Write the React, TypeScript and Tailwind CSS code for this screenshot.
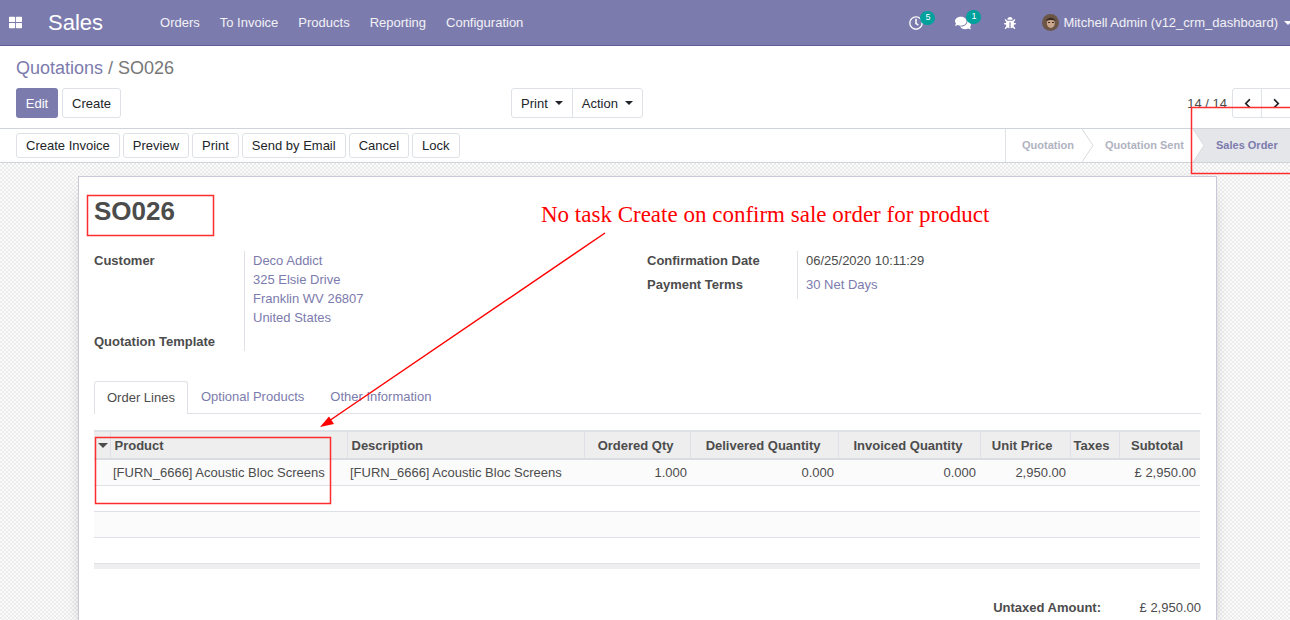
import { FaThLarge, FaRegClock, FaComments, FaBug, FaChevronLeft, FaChevronRight } from "react-icons/fa";

const menu = ["Orders", "To Invoice", "Products", "Reporting", "Configuration"];
const actions = ["Create Invoice", "Preview", "Print", "Send by Email", "Cancel", "Lock"];

function Badge({ n }: { n: number }) {
  return (
    <span className="absolute left-[11px] top-[-5px] flex h-[14px] w-[15px] items-center justify-center rounded-full bg-[#00a09d] text-[9px] leading-none text-white">
      {n}
    </span>
  );
}

function Caret() {
  return <span className="ml-[7px] inline-block align-[3px] border-x-[4px] border-t-[4px] border-x-transparent border-t-current" />;
}

function Btn({ children, className = "" }: { children: React.ReactNode; className?: string }) {
  return (
    <button className={`rounded-[3px] border border-[#dee2e6] bg-white px-[9px] text-[13px] text-[#212529] ${className}`}>
      {children}
    </button>
  );
}

function Chevron({ fill }: { fill?: boolean }) {
  return (
    <svg viewBox="0 0 12 33" className="absolute left-full top-0 z-10 h-[33px] w-[12px]">
      <path d="M0 0L11 16.5L0 33" fill={fill ? "#fff" : "none"} stroke="#d8dade" strokeWidth="1" />
    </svg>
  );
}

function Avatar() {
  return (
    <svg viewBox="0 0 17 17" className="h-[17px] w-[17px]">
      <circle cx="8.5" cy="8.5" r="8.5" fill="#6b5647" />
      <ellipse cx="8.8" cy="9" rx="4" ry="5" fill="#c9a58c" />
      <path d="M4 7C5 3 12 2.500 13.500 7C11 5.500 7 5.500 4 7Z" fill="#3b2a20" />
      <path d="M6 8.500h2M10 8.500h2" stroke="#3b2a20" strokeWidth="1" />
    </svg>
  );
}

export default function App() {
  return (
    <div className="relative h-[620px] w-[1290px] overflow-hidden bg-white font-['Liberation_Sans',Arial,sans-serif] text-[13px] leading-[19px] text-[#4c4c4c]">
      <nav className="flex h-[46px] items-center border-b border-[#5f5e97] bg-[#7c7bad] text-white">
        <FaThLarge className="ml-[9px] h-[13px] w-[13px]" />
        <span className="ml-[26px] text-[22px]">Sales</span>
        <div className="ml-[47px] flex">
          {menu.map((m) => (
            <span key={m} className="px-[10px] text-white/90">{m}</span>
          ))}
        </div>
        <div className="ml-auto flex items-center">
          <span className="relative mr-[32px]">
            <FaRegClock className="h-[14px] w-[14px]" />
            <Badge n={5} />
          </span>
          <span className="relative mr-[33px]">
            <FaComments className="h-[16px] w-[16px]" />
            <Badge n={1} />
          </span>
          <FaBug className="mr-[26px] h-[12px] w-[12px]" />
          <Avatar />
          <span className="ml-[4px] whitespace-nowrap text-white/90">Mitchell Admin (v12_crm_dashboard)</span>
          <span className="ml-[6px] mr-[-2px] border-x-[4px] border-t-[4px] border-x-transparent border-t-white" />
        </div>
      </nav>

      <div className="h-[83px] border-b border-[#ced4da] px-[16px] pt-[10px]">
        <div className="text-[18px] leading-[25px] text-[#777]">
          <span className="text-[#7c7bad]">Quotations</span> / SO026
        </div>
        <div className="mt-[7px] flex h-[30px] items-stretch">
          <button className="w-[42px] rounded-[3px] bg-[#7c7bad] text-[13px] text-white">Edit</button>
          <Btn className="ml-[4px]">Create</Btn>
          <div className="ml-[390px] flex">
            <Btn className="rounded-r-none">Print<Caret /></Btn>
            <Btn className="ml-[-1px] rounded-l-none">Action<Caret /></Btn>
          </div>
          <span className="ml-auto self-center pr-[5px]">14 / 14</span>
          <div className="mr-[-17px] flex">
            <span className="flex w-[30px] items-center justify-center rounded-l-[3px] border border-[#dee2e6] text-[#212529]">
              <FaChevronLeft className="h-[11px] w-[11px]" />
            </span>
            <span className="ml-[-1px] flex w-[30px] items-center justify-center border border-[#dee2e6] text-[#212529]">
              <FaChevronRight className="h-[11px] w-[11px]" />
            </span>
          </div>
        </div>
      </div>

      <div className="flex h-[34px] items-center border-b border-[#ced4da] pl-[16px]">
        <div className="flex h-[25px] gap-[3px]">
          {actions.map((a) => (
            <Btn key={a} className="leading-none">{a}</Btn>
          ))}
        </div>
        <div className="ml-auto flex h-[33px] items-stretch text-[11px] font-bold text-[#b0b3bf]">
          <div className="relative flex w-[77px] items-center border-l border-[#dee2e6] pl-[16px]">
            Quotation
            <Chevron />
          </div>
          <div className="relative flex w-[111px] items-center pl-[23px]">
            Quotation Sent
            <Chevron fill />
          </div>
          <div className="flex w-[97px] items-center bg-[#e4e6ea] pl-[23px] text-[#7c7bad]">Sales Order</div>
        </div>
      </div>

      <div className="h-[457px] bg-[#f7f7f7] bg-[image:repeating-conic-gradient(#ececec_0_25%,#fbfbfb_0_50%)] bg-[length:4px_4px] pl-[78px] pt-[13px]">
        <div className="h-[460px] w-[1139px] border border-[#c8c8d6] bg-white px-[15px] pt-[19px] shadow-[0_5px_20px_-15px_#000]">
          <h1 className="text-[26px] font-bold leading-[30px] text-[#4c4c4c]">SO026</h1>

          <div className="mt-[25px] grid h-[100px] grid-cols-[553px_1fr]">
            <div className="grid grid-cols-[150px_1fr]">
              <div className="relative pt-[0px] font-bold">
                Customer
                <div className="absolute top-[81px]">Quotation Template</div>
              </div>
              <div className="border-l border-[#dee2e6] pl-[8px] pt-[0px] text-[#7c7bad]">
                <div>Deco Addict</div>
                <div>325 Elsie Drive</div>
                <div>Franklin WV 26807</div>
                <div>United States</div>
              </div>
            </div>
            <div className="grid h-[48px] grid-cols-[150px_1fr]">
              <div className="font-bold">
                <div className="h-[24px]">Confirmation Date</div>
                <div>Payment Terms</div>
              </div>
              <div className="border-l border-[#dee2e6] pl-[8px]">
                <div className="h-[24px]">06/25/2020 10:11:29</div>
                <div className="text-[#7c7bad]">30 Net Days</div>
              </div>
            </div>
          </div>

          <div className="mt-[30px] flex h-[33px] border-b border-[#dee2e6]">
            <div className="h-[33px] rounded-t-[3px] border border-b-0 border-[#dee2e6] bg-white px-[12px] pt-[6px]">Order Lines</div>
            <div className="px-[13px] pt-[6px] text-[#7c7bad]">Optional Products</div>
            <div className="px-[13px] pt-[6px] text-[#7c7bad]">Other Information</div>
          </div>

          <table className="mt-[16px] w-[1106px] table-fixed border-collapse">
            <colgroup>
              <col className="w-[16px]" />
              <col className="w-[237px]" />
              <col className="w-[237px]" />
              <col className="w-[106px]" />
              <col className="w-[148px]" />
              <col className="w-[142px]" />
              <col className="w-[90px]" />
              <col className="w-[49px]" />
              <col className="w-[81px]" />
            </colgroup>
            <thead>
              <tr className="h-[28px] border-y-[2px] border-t-[#dee2e6] border-b-[#d9dce1] bg-[#eeeeee] font-bold">
                <th className="border-r border-[#dee2e6] pl-[4px] text-left">
                  <span className="block h-0 w-0 border-x-[5px] border-t-[5px] border-x-transparent border-t-[#4c4c4c]" />
                </th>
                <th className="border-r border-[#dee2e6] pl-[4px] text-left">Product</th>
                <th className="border-r border-[#dee2e6] pl-[4px] text-left">Description</th>
                <th className="border-r border-[#dee2e6] pr-[16px] text-right">Ordered Qty</th>
                <th className="border-r border-[#dee2e6] pr-[17px] text-right">Delivered Quantity</th>
                <th className="border-r border-[#dee2e6] pr-[17px] text-right">Invoiced Quantity</th>
                <th className="border-r border-[#dee2e6] pr-[17px] text-right">Unit Price</th>
                <th className="border-r border-[#dee2e6] pr-[9px] text-right">Taxes</th>
                <th className="pr-[17px] text-right">Subtotal</th>
              </tr>
            </thead>
            <tbody>
              <tr className="h-[26px] border-b border-[#dee2e6] bg-[#fbfbfb]">
                <td />
                <td className="whitespace-nowrap pl-[3px]">[FURN_6666] Acoustic Bloc Screens</td>
                <td className="whitespace-nowrap pl-[3px]">[FURN_6666] Acoustic Bloc Screens</td>
                <td className="pr-[3px] text-right">1.000</td>
                <td className="pr-[4px] text-right">0.000</td>
                <td className="pr-[4px] text-right">0.000</td>
                <td className="pr-[4px] text-right">2,950.00</td>
                <td />
                <td className="pr-[4px] text-right">£ 2,950.00</td>
              </tr>
              <tr className="h-[26px] border-b border-[#dee2e6]"><td colSpan={9} /></tr>
              <tr className="h-[26px] border-b border-[#dee2e6] bg-[#fbfbfb]"><td colSpan={9} /></tr>
              <tr className="h-[26px] border-b border-[#dee2e6]"><td colSpan={9} /></tr>
            </tbody>
            <tfoot>
              <tr className="h-[6px] bg-[#eeeeee]"><td colSpan={9} /></tr>
            </tfoot>
          </table>

          <div className="mt-[29px] flex justify-end">
            <span className="font-bold">Untaxed Amount:</span>
            <span className="w-[100px] text-right">£ 2,950.00</span>
          </div>
        </div>
      </div>

      <svg className="pointer-events-none absolute inset-0 z-20 h-[620px] w-[1290px]" viewBox="0 0 1290 620">
        <g fill="none" stroke="#ff2d2d" strokeWidth="1.500">
          <rect x="87.500" y="195.500" width="126" height="40" />
          <rect x="95.500" y="437.500" width="235" height="66" />
          <rect x="1191.500" y="107.500" width="110" height="66" />
        </g>
        <path d="M605 233L326 423" stroke="#f00" strokeWidth="1.500" />
        <path d="M320 427L329 416.500L334 424Z" fill="#f00" />
      </svg>
      <div className="absolute left-[541px] top-[200px] z-20 whitespace-nowrap font-['Liberation_Serif',serif] text-[23px] leading-[30px] text-[#f00]">
        No task Create on confirm sale order for product
      </div>
    </div>
  );
}
